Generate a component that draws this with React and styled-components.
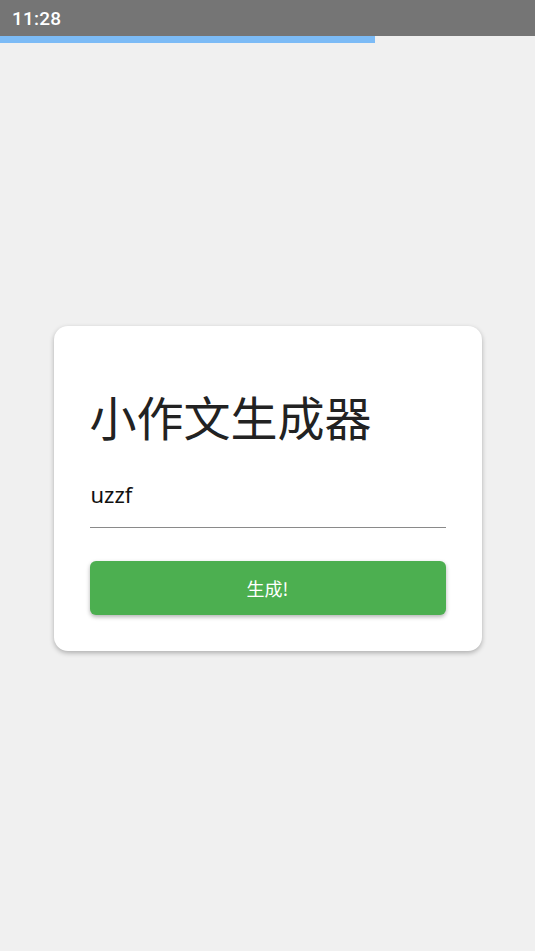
import React, { useState } from "react";
import styled, { createGlobalStyle } from "styled-components";

const GlobalStyle = createGlobalStyle`
  html, body {
    margin: 0;
    padding: 0;
    background: #f0f0f0;
  }
  * {
    box-sizing: border-box;
  }
`;

const Screen = styled.div`
  width: 535px;
  height: 951px;
  display: flex;
  flex-direction: column;
  background: #f0f0f0;
  font-family: "Noto Sans", "Noto Sans CJK SC", sans-serif;
`;

const StatusBar = styled.div`
  height: 36px;
  background: #757575;
  color: #fff;
  display: flex;
  align-items: center;
  padding-left: 12px;
  font-family: Roboto, "Noto Sans", sans-serif;
  font-weight: 500;
  font-size: 19px;
  letter-spacing: 0.2px;
`;

const Progress = styled.div`
  height: 7px;
  width: ${({ value }) => value}%;
  background: #7cbbf6;
`;

const Body = styled.div`
  flex: 1;
  display: flex;
  align-items: center;
  justify-content: center;
  padding-bottom: 18px;
`;

const Card = styled.div`
  width: 428px;
  background: #fff;
  border-radius: 14px;
  box-shadow: 0 2px 5px rgba(0, 0, 0, 0.28);
  padding: 62px 36px 36px;
  display: flex;
  flex-direction: column;
`;

const Title = styled.h1`
  margin: 0;
  font-family: "Noto Sans CJK SC", sans-serif;
  font-weight: 400;
  font-size: 47px;
  line-height: 56px;
  color: #222;
`;

const Field = styled.input`
  margin-top: 30px;
  border: none;
  border-bottom: 1px solid #8a8a8a;
  outline: none;
  background: transparent;
  font-family: "Noto Sans", "Noto Sans CJK SC", sans-serif;
  font-size: 22px;
  color: #111;
  height: 54px;
  padding: 0 0 12px 1px;
`;

const Button = styled.button`
  margin-top: 33px;
  height: 54px;
  border: none;
  border-radius: 6px;
  background: #4caf50;
  color: #fff;
  font-family: "Noto Sans CJK SC", sans-serif;
  font-size: 18px;
  box-shadow: 0 2px 4px rgba(0, 0, 0, 0.3);
  cursor: pointer;
`;

export default function App() {
  const [topic, setTopic] = useState("uzzf");

  return (
    <>
      <GlobalStyle />
      <Screen>
        <StatusBar>11:28</StatusBar>
        <Progress value={70} />
        <Body>
          <Card>
            <Title>小作文生成器</Title>
            <Field value={topic} onChange={(e) => setTopic(e.target.value)} />
            <Button>生成!</Button>
          </Card>
        </Body>
      </Screen>
    </>
  );
}
